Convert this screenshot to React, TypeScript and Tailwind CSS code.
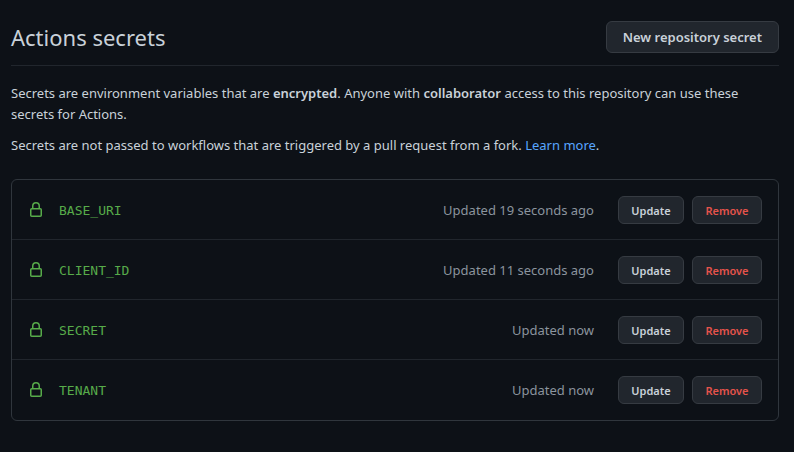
type Secret = {
  name: string
  updated: string
}

const secrets: Secret[] = [
  { name: 'BASE_URI', updated: 'Updated 19 seconds ago' },
  { name: 'CLIENT_ID', updated: 'Updated 11 seconds ago' },
  { name: 'SECRET', updated: 'Updated now' },
  { name: 'TENANT', updated: 'Updated now' },
]

function LockIcon() {
  return (
    <svg viewBox="0 0 16 16" className="w-4 h-4 shrink-0 fill-[#57ab4a]" aria-hidden="true">
      <path
        fillRule="evenodd"
        d="M4 4v2h-.25A1.75 1.75 0 002 7.75v5.5c0 .966.784 1.75 1.75 1.75h8.5A1.75 1.75 0 0014 13.25v-5.5A1.75 1.75 0 0012.25 6H12V4a4 4 0 10-8 0zm6.5 2V4a2.5 2.5 0 10-5 0v2h5zM12 7.5h.25a.25.25 0 01.25.25v5.5a.25.25 0 01-.25.25h-8.5a.25.25 0 01-.25-.25v-5.5a.25.25 0 01.25-.25H12z"
      />
    </svg>
  )
}

export default function App() {
  return (
    <main className="min-h-screen bg-[#0d1117] pl-[11px] pr-[15px] pt-[21px] pb-8 font-['Noto_Sans',sans-serif] text-[13px] leading-[21px] text-[#c9d1d9]">
      <header className="flex items-center justify-between border-b border-[#21262d] pb-3">
        <h1 className="text-[22px] leading-8">Actions secrets</h1>
        <button
          type="button"
          className="h-8 rounded-md border border-[#363b42] bg-[#21262d] px-4 text-[13px] font-semibold hover:bg-[#30363d]"
        >
          New repository secret
        </button>
      </header>

      <div className="mt-[17px] space-y-2.5">
        <p>
          Secrets are environment variables that are <strong className="font-semibold">encrypted</strong>. Anyone with{' '}
          <strong className="font-semibold">collaborator</strong> access to this repository can use these secrets for Actions.
        </p>
        <p>
          Secrets are not passed to workflows that are triggered by a pull request from a fork.{' '}
          <a href="#learn-more" className="text-[#58a6ff] hover:underline">Learn more</a>.
        </p>
      </div>

      <ul className="mt-[23px] rounded-md border border-[#30363d]">
        {secrets.map((secret) => (
          <li key={secret.name} className="-mt-px flex items-center border-t border-[#21262d] p-4 first:border-transparent">
            <LockIcon />
            <code className="ml-[15px] flex-1 font-['DejaVu_Sans_Mono',monospace] text-[13px] text-[#57ab4a]">{secret.name}</code>
            <span className="mr-6 text-[#8b949e]">{secret.updated}</span>
            <div className="flex gap-2">
              <button
                type="button"
                aria-label={`Update ${secret.name}`}
                className="h-7 w-[66px] rounded-md border border-[#363b42] bg-[#21262d] text-[11px] font-semibold hover:bg-[#30363d]"
              >
                Update
              </button>
              <button
                type="button"
                aria-label={`Remove ${secret.name}`}
                className="h-7 w-[70px] rounded-md border border-[#363b42] bg-[#21262d] text-[11px] font-semibold text-[#e5534b] hover:bg-[#30363d]"
              >
                Remove
              </button>
            </div>
          </li>
        ))}
      </ul>
    </main>
  )
}
